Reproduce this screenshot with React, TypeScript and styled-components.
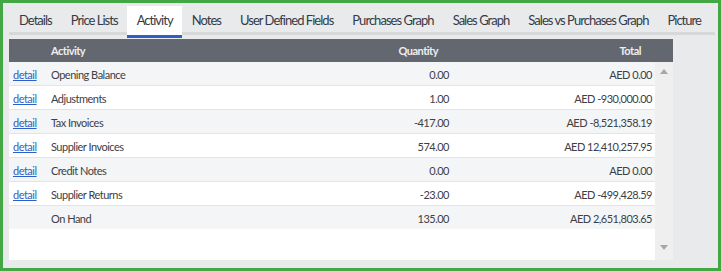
import { createGlobalStyle, styled } from "styled-components";

const GlobalStyle = createGlobalStyle`
  html, body {
    margin: 0;
    padding: 0;
    background: #e9eaec;
  }
  * {
    box-sizing: border-box;
  }
`;

interface ActivityRow {
  label: string;
  qty: string;
  total: string;
  hasDetail: boolean;
}

const rows: ActivityRow[] = [
  { label: "Opening Balance", qty: "0.00", total: "AED 0.00", hasDetail: true },
  { label: "Adjustments", qty: "1.00", total: "AED -930,000.00", hasDetail: true },
  { label: "Tax Invoices", qty: "-417.00", total: "AED -8,521,358.19", hasDetail: true },
  { label: "Supplier Invoices", qty: "574.00", total: "AED 12,410,257.95", hasDetail: true },
  { label: "Credit Notes", qty: "0.00", total: "AED 0.00", hasDetail: true },
  { label: "Supplier Returns", qty: "-23.00", total: "AED -499,428.59", hasDetail: true },
  { label: "On Hand", qty: "135.00", total: "AED 2,651,803.65", hasDetail: false },
];

const tabs = [
  "Details",
  "Price Lists",
  "Activity",
  "Notes",
  "User Defined Fields",
  "Purchases Graph",
  "Sales Graph",
  "Sales vs Purchases Graph",
  "Picture",
];

const Frame = styled.div`
  width: 721px;
  height: 271px;
  border: 3px solid #43a843;
  background: #e9eaec;
  padding: 3px 3px 0 6px;
  font-family: Lato, "Open Sans", sans-serif;
`;

const TabBar = styled.div`
  display: flex;
  height: 29px;
  border-bottom: 3px solid #d7d8da;
`;

const Tab = styled.div<{ $active?: boolean }>`
  height: 32px;
  margin-bottom: -3px;
  padding: 1px 9px 3px 10px;
  display: flex;
  align-items: center;
  font-size: 13px;
  letter-spacing: -0.97px;
  color: #353b45;
  white-space: nowrap;
  background: ${(p) => (p.$active ? "#ffffff" : "transparent")};
  border-bottom: 3px solid ${(p) => (p.$active ? "#2f5ec6" : "transparent")};
`;

const Grid = styled.div`
  margin-top: 4px;
  width: 664px;
  height: 221px;
  display: flex;
  flex-direction: column;
  font-size: 11px;
  letter-spacing: -0.5px;
`;

const HeaderRow = styled.div`
  display: grid;
  grid-template-columns: 38px 1fr 150px 203px 18px;
  height: 23px;
  align-items: center;
  background: #636870;
  color: #eceef0;
  font-weight: 700;
`;

const HeadCell = styled.div<{ $right?: boolean }>`
  padding: 0 ${(p) => (p.$right ? "14px" : "4px")} 0 4px;
  text-align: ${(p) => (p.$right ? "right" : "left")};
`;

const Body = styled.div`
  flex: 1;
  display: flex;
  background: #ffffff;
`;

const RowList = styled.div`
  flex: 1;
`;

const Row = styled.div<{ $striped?: boolean }>`
  display: grid;
  grid-template-columns: 38px 1fr 150px 203px;
  height: 24px;
  align-items: center;
  border-bottom: 1px solid #e3e4e6;
  background: ${(p) => (p.$striped ? "#f4f5f6" : "#ffffff")};
  color: #3d4047;

  &:last-child {
    border-bottom: none;
    height: 23px;
  }
`;

const Cell = styled.div<{ $right?: boolean }>`
  padding: 1px ${(p) => (p.$right ? "3px" : "4px")} 0 4px;
  text-align: ${(p) => (p.$right ? "right" : "left")};
  white-space: nowrap;
`;

const DetailLink = styled.a`
  color: #2f5ec6;
  text-decoration: underline;
  cursor: pointer;
`;

const ScrollTrack = styled.div`
  width: 18px;
  background: #efeff0;
  display: flex;
  flex-direction: column;
  justify-content: space-between;
  align-items: center;
  padding: 7px 0 10px 0;
`;

const Arrow = ({ down }: { down?: boolean }) => (
  <svg width="8" height="5" viewBox="0 0 8 5">
    <path d={down ? "M0 0 L8 0 L4 5 Z" : "M0 5 L8 5 L4 0 Z"} fill="#a6a7a9" />
  </svg>
);

export default function App() {
  return (
    <>
      <GlobalStyle />
      <Frame>
        <TabBar>
          {tabs.map((t) => (
            <Tab key={t} $active={t === "Activity"}>
              {t}
            </Tab>
          ))}
        </TabBar>
        <Grid>
          <HeaderRow>
            <HeadCell />
            <HeadCell>Activity</HeadCell>
            <HeadCell $right>Quantity</HeadCell>
            <HeadCell $right>Total</HeadCell>
            <HeadCell />
          </HeaderRow>
          <Body>
            <RowList>
              {rows.map((r, i) => (
                <Row key={r.label} $striped={i % 2 === 0}>
                  <Cell>{r.hasDetail && <DetailLink>detail</DetailLink>}</Cell>
                  <Cell>{r.label}</Cell>
                  <Cell $right>{r.qty}</Cell>
                  <Cell $right>{r.total}</Cell>
                </Row>
              ))}
            </RowList>
            <ScrollTrack>
              <Arrow />
              <Arrow down />
            </ScrollTrack>
          </Body>
        </Grid>
      </Frame>
    </>
  );
}
